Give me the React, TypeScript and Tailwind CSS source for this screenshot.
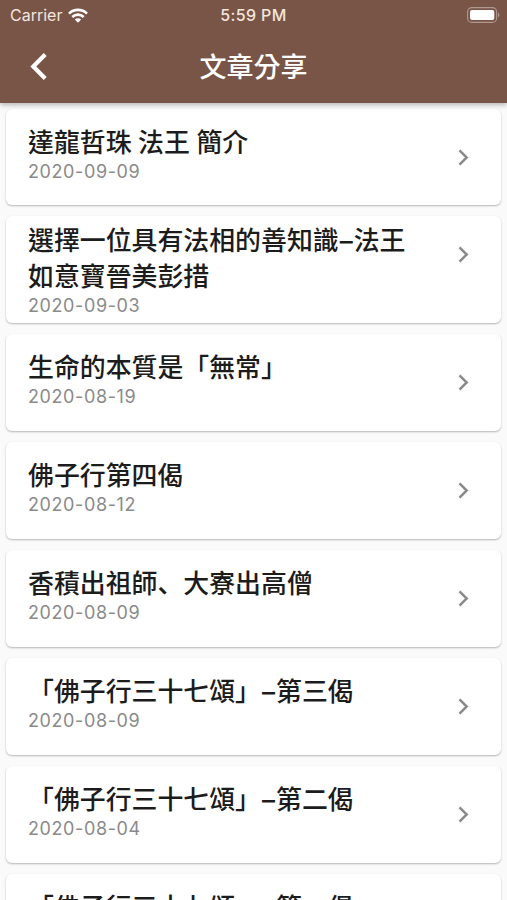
import { clsx } from "clsx";

type Article = {
  id: number;
  title: string;
  date: string;
  tall?: boolean;
};

const ARTICLES: Article[] = [
  { id: 1, title: "達龍哲珠 法王 簡介", date: "2020-09-09" },
  { id: 2, title: "選擇一位具有法相的善知識–法王如意寶晉美彭措", date: "2020-09-03", tall: true },
  { id: 3, title: "生命的本質是「無常」", date: "2020-08-19" },
  { id: 4, title: "佛子行第四偈", date: "2020-08-12" },
  { id: 5, title: "香積出祖師、大寮出高僧", date: "2020-08-09" },
  { id: 6, title: "「佛子行三十七頌」–第三偈", date: "2020-08-09" },
  { id: 7, title: "「佛子行三十七頌」–第二偈", date: "2020-08-04" },
  { id: 8, title: "「佛子行三十七頌」–第一偈", date: "2020-08-02" },
];

function StatusBar() {
  return (
    <div className="grid h-[30px] grid-cols-3 items-center pl-[10px] pr-[7px] font-['Inter',sans-serif] text-[#f3e6df]">
      <div className="flex items-center gap-[6px]">
        <span className="text-[16px]">Carrier</span>
        <svg className="h-[15px] w-5" viewBox="0 0 20 15" fill="none" stroke="#fff" strokeWidth={2.6}>
          <path d="M1 5.6a12.8 12.8 0 0 1 18 0" />
          <path d="M4.3 9a8.1 8.1 0 0 1 11.4 0" />
          <path d="M10 14.8 6.9 11.6a4.4 4.4 0 0 1 6.2 0z" fill="#fff" stroke="none" />
        </svg>
      </div>
      <span className="-ml-[3px] text-center text-[16px] font-medium tracking-[0.35px]">5:59 PM</span>
      <svg className="h-4 w-[33px] justify-self-end" viewBox="0 0 33 16" fill="none">
        <rect x="0.6" y="0.6" width="29" height="14.8" rx="4.2" stroke="#b09a90" strokeWidth={1.1} />
        <rect x="3" y="3" width="24.3" height="10" rx="2" fill="#fff" />
        <path d="M31 5.6c1.8.7 1.8 4.1 0 4.8z" fill="#b09a90" />
      </svg>
    </div>
  );
}

function Header() {
  return (
    <header className="relative z-10 h-[103px] shrink-0 bg-[#795548] shadow-[0_2px_5px_rgba(0,0,0,0.28)]">
      <StatusBar />
      <div className="grid h-[72px] grid-cols-[77px_1fr_77px] items-center">
        <button className="flex justify-center" aria-label="返回">
          <svg className="h-[27px] w-[17px]" viewBox="0 0 17 27" fill="none" stroke="#fff" strokeWidth={4.2}>
            <path d="M15.2 1.6 3.3 13.5l11.9 11.9" />
          </svg>
        </button>
        <h1 className="text-center text-[27px] font-medium leading-9 text-white">文章分享</h1>
      </div>
    </header>
  );
}

// 頓號靠左下，破折號略寬
function Title({ text }: { text: string }) {
  return text.split(/([、–])/).map((part, i) => {
    if (part === "、") {
      return (
        <span key={i} lang="ja" className="font-['Noto_Sans_CJK_JP',sans-serif]">
          {part}
        </span>
      );
    }
    if (part === "–") {
      return (
        <span key={i} className="mx-[1px] font-['Inter',sans-serif] text-[26px] leading-none">
          {part}
        </span>
      );
    }
    return part;
  });
}

function ArticleCard({ article }: { article: Article }) {
  return (
    <li
      className={clsx(
        "flex h-[97px] shrink-0 items-start rounded-[6px] bg-white pl-[22px] pr-[32px] shadow-[0_1px_2px_rgba(0,0,0,0.28)] first:h-[96px]",
        article.tall ? "h-[107px] pt-[5px]" : "pt-[14px]",
      )}
    >
      <div className="w-[388px] shrink-0">
        <h2 className="text-[25.9px] font-medium leading-9 text-[#1c1c1c] [word-spacing:0.7px]">
          <Title text={article.title} />
        </h2>
        <p className="mt-[2px] font-['Inter',sans-serif] text-[18px] leading-[22px] tracking-[0.6px] text-[#8a8a8a]">
          {article.date}
        </p>
      </div>
      <svg
        className={clsx("ml-auto h-[17px] w-[11px]", article.tall ? "mt-[25px]" : "mt-[26px]")}
        viewBox="0 0 11 17"
        fill="none"
        stroke="#8a8a8a"
        strokeWidth={2.5}
      >
        <path d="m1.5 1.3 7.2 7.2-7.2 7.2" />
      </svg>
    </li>
  );
}

export default function App() {
  return (
    <div
      lang="zh-Hant"
      className="flex h-[900px] w-full flex-col overflow-hidden bg-[#fafafa] font-['Noto_Sans_CJK_TC',sans-serif]"
    >
      <Header />
      <ul className="flex flex-col gap-[11px] px-[6px] pt-[6px]">
        {ARTICLES.map((article) => (
          <ArticleCard key={article.id} article={article} />
        ))}
      </ul>
    </div>
  );
}
